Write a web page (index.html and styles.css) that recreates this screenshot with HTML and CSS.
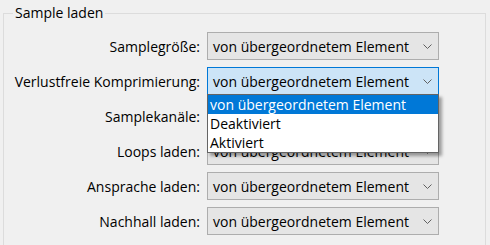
FILE: index.html
```html
<!DOCTYPE html>
<html lang="de">

<head>
    <meta charset="UTF-8">
    <title>Sample laden</title>
    <link rel="stylesheet" href="styles.css">
</head>

<body>
    <fieldset class="group">
        <legend>Sample laden</legend>
        <div class="rows">
            <label class="row-label">Samplegröße:</label>
            <div class="combo">
                <span>von übergeordnetem Element</span>
                <svg class="chevron" width="9" height="5" viewBox="0 0 9 5"><path d="M0.5 0.5 L4.5 4.5 L8.5 0.5" /></svg>
            </div>

            <label class="row-label">Verlustfreie Komprimierung:</label>
            <div class="combo focused">
                <span>von übergeordnetem Element</span>
                <svg class="chevron" width="9" height="5" viewBox="0 0 9 5"><path d="M0.5 0.5 L4.5 4.5 L8.5 0.5" /></svg>
                <!-- open list of the focused combo -->
                <ul class="dropdown">
                    <li class="selected">von übergeordnetem Element</li>
                    <li>Deaktiviert</li>
                    <li>Aktiviert</li>
                </ul>
            </div>

            <label class="row-label">Samplekanäle:</label>
            <div class="combo">
                <span>von übergeordnetem Element</span>
                <svg class="chevron" width="9" height="5" viewBox="0 0 9 5"><path d="M0.5 0.5 L4.5 4.5 L8.5 0.5" /></svg>
            </div>

            <label class="row-label">Loops laden:</label>
            <div class="combo">
                <span>von übergeordnetem Element</span>
                <svg class="chevron" width="9" height="5" viewBox="0 0 9 5"><path d="M0.5 0.5 L4.5 4.5 L8.5 0.5" /></svg>
            </div>

            <label class="row-label">Ansprache laden:</label>
            <div class="combo">
                <span>von übergeordnetem Element</span>
                <svg class="chevron" width="9" height="5" viewBox="0 0 9 5"><path d="M0.5 0.5 L4.5 4.5 L8.5 0.5" /></svg>
            </div>

            <label class="row-label">Nachhall laden:</label>
            <div class="combo">
                <span>von übergeordnetem Element</span>
                <svg class="chevron" width="9" height="5" viewBox="0 0 9 5"><path d="M0.5 0.5 L4.5 4.5 L8.5 0.5" /></svg>
            </div>
        </div>
    </fieldset>
</body>

</html>
```

FILE: styles.css
```css
* {
    box-sizing: border-box;
    margin: 0;
    padding: 0;
    font-family: 'Open Sans', 'Noto Sans', sans-serif;
}

html,
body {
    height: 245px;
    overflow: hidden;
}

body {
    background: #f0f0f0;
    color: #000;
    font-size: 14px;
}

.group {
    margin: 3px 4px 0 3px;
    padding: 0 0 0 9px;
    border: 1px solid #dcdcdc;
    border-bottom: none;
    height: 242px;
}

legend {
    padding: 0 2px;
    line-height: 20px;
}

.rows {
    display: grid;
    grid-template-columns: 187px 232px;
    grid-auto-rows: 28px;
    column-gap: 7px;
    row-gap: 7px;
    margin-top: 9px;
}

.row-label {
    text-align: right;
    align-self: center;
    white-space: nowrap;
}

.combo {
    position: relative;
    display: flex;
    align-items: center;
    justify-content: space-between;
    padding: 0 6px 0 5px;
    background: #e5e5e5;
    border: 1px solid #adadad;
    white-space: nowrap;
}

.combo.focused {
    background: #cce4f7;
    border-color: #0078d7;
}

.chevron path {
    fill: none;
    stroke: #606060;
    stroke-width: 1;
}

.dropdown {
    position: absolute;
    top: 100%;
    left: -1px;
    right: -1px;
    list-style: none;
    background: #fff;
    border: 1px solid #646464;
    box-shadow: 3px 3px 3px rgba(0, 0, 0, 0.35);
    z-index: 2;
}

.dropdown li {
    height: 19px;
    line-height: 19px;
    padding-left: 2px;
}

.dropdown li.selected {
    background: #0078d7;
    color: #fff;
}
```
